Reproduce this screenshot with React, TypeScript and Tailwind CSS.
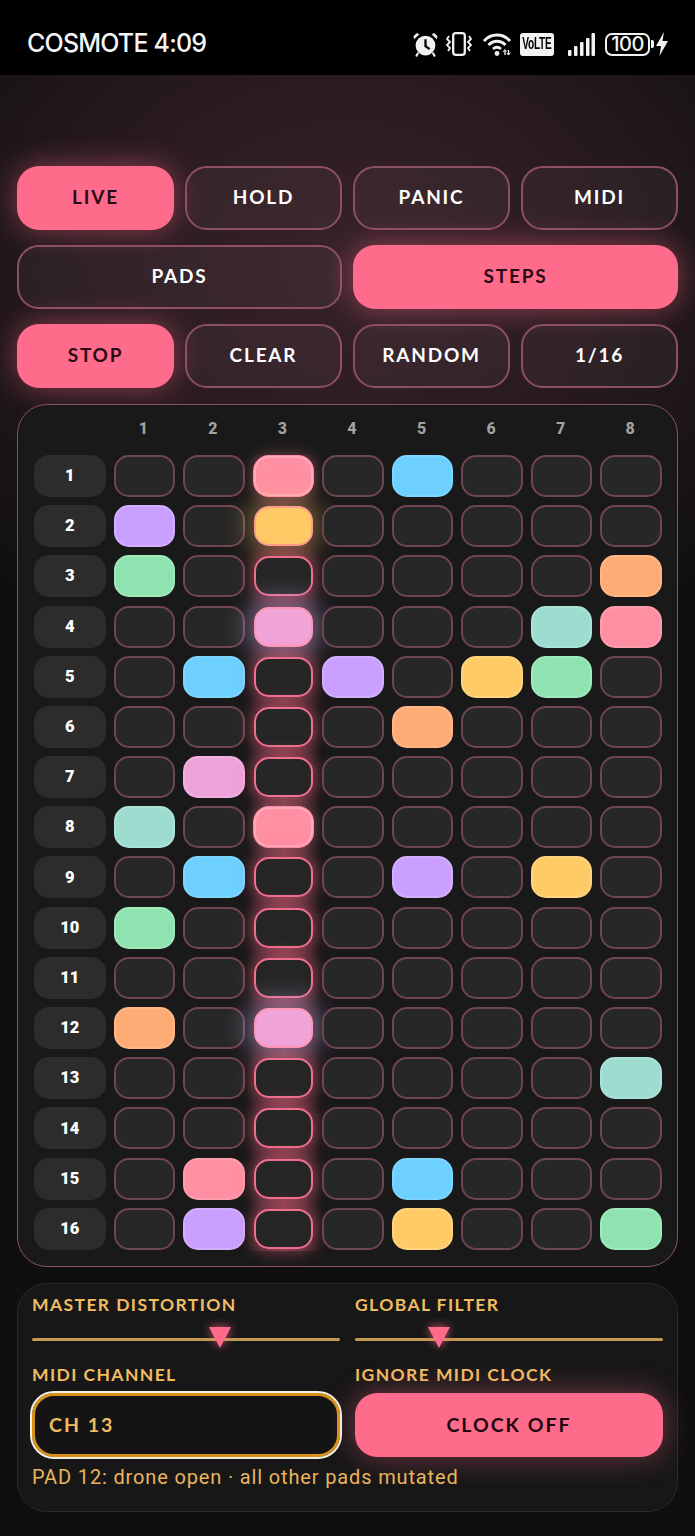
import React from "react";

type PadColor = "rose" | "sky" | "violet" | "amber" | "mint" | "peach" | "orchid" | "teal";

const padFill: Record<PadColor, string> = {
  rose: "bg-[#ff8fa3] border-[#ff9cae]",
  sky: "bg-[#6dd0ff] border-[#7dd6ff]",
  violet: "bg-[#c9a0ff] border-[#d2b0ff]",
  amber: "bg-[#ffcb66] border-[#ffd47c]",
  mint: "bg-[#8fe3b0] border-[#9deabb]",
  peach: "bg-[#ffab76] border-[#ffb786]",
  orchid: "bg-[#eda2d8] border-[#f2b0e0]",
  teal: "bg-[#9edcd0] border-[#ace3d8]",
};

const playFill: Record<string, string> = {
  rose: "bg-[#ff8fa3] border-[#ffa9b8] shadow-[0_0_0_1px_#ff8ba6,0_0_14px_2px_rgba(255,143,163,0.32)]",
  amber: "bg-[#ffcb66] border-[#ff9e8c] shadow-[0_0_24px_8px_rgba(255,203,102,0.34)]",
  orchid: "bg-[#f0a4d8] border-[#ff96b6] shadow-[0_0_24px_8px_rgba(200,170,235,0.46)]",
};

// Sequence pattern: one map per step row, keyed by pad column (1-8).
const pattern: Record<number, PadColor>[] = [
  { 3: "rose", 5: "sky" },
  { 1: "violet", 3: "amber" },
  { 1: "mint", 8: "peach" },
  { 3: "orchid", 7: "teal", 8: "rose" },
  { 2: "sky", 4: "violet", 6: "amber", 7: "mint" },
  { 5: "peach" },
  { 2: "orchid" },
  { 1: "teal", 3: "rose" },
  { 2: "sky", 5: "violet", 7: "amber" },
  { 1: "mint" },
  {},
  { 1: "peach", 3: "orchid" },
  { 8: "teal" },
  {},
  { 2: "rose", 5: "sky" },
  { 2: "violet", 5: "amber", 8: "mint" },
];

const columns = [1, 2, 3, 4, 5, 6, 7, 8];
const uiFont = "font-['Lato','Noto_Sans',sans-serif]";

function Btn({ label, on, wide }: { label: string; on?: boolean; wide?: boolean }) {
  return (
    <button
      className={`h-[64px] rounded-[22px] pb-[2px] text-[19px] font-bold tracking-[1.8px] ${wide ? "col-span-2" : ""} ${
        on
          ? "bg-[#ff6b8b] text-[#2a0a14] shadow-[0_0_30px_rgba(255,107,139,0.46)]"
          : "border-2 border-[#8c4f63] bg-[rgba(255,255,255,0.04)] text-white"
      }`}
    >
      {label}
    </button>
  );
}

function Cell({ row, col }: { row: number; col: number }) {
  const color = pattern[row][col];
  if (col === 3) {
    return (
      <div
        className={`relative z-10 mx-[1.5px] my-px h-[40px] rounded-[15px] border-2 ${
          color ? playFill[color] : "border-[#ef6f8e] bg-[#262626] shadow-[0_0_16px_3px_rgba(255,107,139,0.42)]"
        }`}
      />
    );
  }
  return (
    <div
      className={`relative z-10 h-[42px] rounded-[15px] border-2 ${
        color ? padFill[color] : "border-[#6f4553] bg-[#272727]"
      }`}
    />
  );
}

function Slider({ at }: { at: string }) {
  return (
    <div className="relative mt-[12px] h-[21px]">
      <div className="absolute inset-x-0 top-[11px] h-[3px] rounded-full bg-[#c29a54]" />
      <svg
        viewBox="0 0 22 21"
        className={`absolute top-0 h-[21px] w-[22px] ${at} drop-shadow-[0_0_5px_rgba(255,107,139,0.8)]`}
      >
        <path d="M0 0H22L11 21Z" fill="#ff6b8b" />
      </svg>
    </div>
  );
}

function StatusIcons() {
  return (
    <div className="flex items-center">
      {/* alarm clock */}
      <svg viewBox="0 0 24 24" className="h-[25px] w-[25px]" fill="#f2f2f2">
        <circle cx="12" cy="13" r="9.5" />
        <path d="M1 7 6 2.5 3.8 1 0.6 3.8ZM23 7 18 2.5 20.2 1 23.4 3.8Z" />
        <path d="M5 20 3 23.5M19 20 21 23.5" stroke="#f2f2f2" strokeWidth="2" />
        <path d="M12 7v6.5l4 3" stroke="#000" strokeWidth="2.2" fill="none" />
      </svg>
      {/* vibrate */}
      <svg viewBox="0 0 26 24" className="ml-[8px] h-[24px] w-[26px]" fill="none" stroke="#f2f2f2" strokeWidth="2.3">
        <rect x="7.2" y="1.2" width="11.6" height="21.6" rx="2.6" />
        <path d="M3 4 1 7l3 3-3 3 3 3-2 3M23 4l2 3-3 3 3 3-3 3 2 3" strokeWidth="1.8" />
      </svg>
      {/* wifi with transfer arrows */}
      <svg viewBox="0 0 30 24" className="ml-[11px] h-[24px] w-[30px]" fill="none" stroke="#f2f2f2">
        <path d="M1 9C8 1 20 1 27 9" strokeWidth="2.8" />
        <path d="M5.5 13C10.5 8 17.5 8 22.5 13" strokeWidth="2.8" />
        <path d="M10 17c2.500-2.300 5.500-2.300 8 0" strokeWidth="2.8" />
        <circle cx="14" cy="21.500" r="2.400" fill="#f2f2f2" stroke="none" />
        <path d="M22 23v-5M25.500 18v5" strokeWidth="1.4" />
        <path d="M20 20l2-2.500 1.500 2M24 21l1.500 2 2-2.500" strokeWidth="1" />
      </svg>
      {/* VoLTE badge */}
      <span className="ml-[7px] flex h-[23px] w-[34px] items-center justify-center overflow-hidden rounded-[3px] bg-[#f2f2f2] font-['Liberation_Sans',sans-serif] text-[13px] font-bold text-black">
        <span className="inline-block scale-x-[0.78] scale-y-[1.3] tracking-[-0.3px]">VoLTE</span>
      </span>
      {/* signal bars */}
      <svg viewBox="0 0 27 23" className="ml-[14px] h-[23px] w-[27px]" fill="#f2f2f2">
        <rect x="0" y="17" width="3.500" height="6" rx="1" />
        <rect x="6" y="13" width="3.500" height="10" rx="1" />
        <rect x="12" y="9" width="3.500" height="14" rx="1" />
        <rect x="18" y="5" width="3.500" height="18" rx="1" />
        <rect x="23.500" y="0" width="3.500" height="23" rx="1" />
      </svg>
      {/* battery */}
      <span className="relative ml-[10px] flex h-[23px] w-[45px] items-center justify-center rounded-[7px] border-2 border-[#f2f2f2] font-['Inter',sans-serif] text-[20px] font-medium tracking-[-0.5px] text-[#f2f2f2]">
        100
        <span className="absolute right-[-6px] top-[5px] h-[8px] w-[3px] rounded-r-[2px] bg-[#f2f2f2]" />
      </span>
      <svg viewBox="0 0 12 24" className="ml-[6px] h-[24px] w-[12px]" fill="#f2f2f2">
        <path d="M8 0 0 14H5L3.500 24 12 9H6.500Z" />
      </svg>
    </div>
  );
}

export default function App() {
  return (
    <div className={`${uiFont} flex h-[1536px] w-full flex-col overflow-hidden bg-[#0f0f0f]`}>
      <header className="flex h-[75px] shrink-0 items-center justify-between bg-black px-[27px] pt-[13px] font-['Inter',sans-serif] text-[25px] font-medium tracking-[-0.8px] text-[#f5f5f5]">
        <span>COSMOTE 4:09</span>
        <StatusIcons />
      </header>

      <main className="flex flex-1 flex-col bg-[radial-gradient(ellipse_540px_420px_at_50%_190px,#38222a_0%,#2a1b20_45%,#14100f00_100%)] px-[17px] pt-[91px]">
        <div className="grid grid-cols-4 gap-x-[11px] gap-y-[15px]">
          <Btn label="LIVE" on />
          <Btn label="HOLD" />
          <Btn label="PANIC" />
          <Btn label="MIDI" />
          <Btn label="PADS" wide />
          <Btn label="STEPS" on wide />
          <Btn label="STOP" on />
          <Btn label="CLEAR" />
          <Btn label="RANDOM" />
          <Btn label="1/16" />
        </div>

        <section className="mt-[16px] h-[863px] rounded-[30px] border-[1.5px] border-[#8a5064] bg-[#1a1919] pl-[16px] pr-[15px] pt-[10px]">
          <div className="relative grid grid-cols-[71.5px_repeat(8,minmax(0,1fr))] gap-x-[8px] gap-y-[8.200px]">
            <div className="h-[31.800px]" />
            {columns.map((c) => (
              <div
                key={c}
                className="h-[31.800px] pr-[2px] text-center font-['Roboto',sans-serif] text-[16px] font-extrabold leading-[28px] text-[#a3a3a3]"
              >
                {c}
              </div>
            ))}
            {/* playhead band sits behind the third pad column, stronger toward the lower steps */}
            <div className="pointer-events-none absolute bottom-[-1px] left-[213px] top-[40px] w-[74px] bg-[linear-gradient(90deg,rgba(255,107,139,0)_0%,rgba(255,107,139,0.18)_24%,rgba(255,107,139,0.32)_50%,rgba(255,107,139,0.18)_76%,rgba(255,107,139,0)_100%)] [mask-image:linear-gradient(180deg,rgba(0,0,0,0.45)_0%,rgba(0,0,0,1)_40%)]" />
            {pattern.map((_, row) => (
              <React.Fragment key={row}>
                <div className="flex h-[42px] items-center justify-center rounded-[15px] bg-[#2c2c2c] pt-px font-['Roboto',sans-serif] text-[16.500px] font-black text-white">
                  {row + 1}
                </div>
                {columns.map((c) => (
                  <Cell key={c} row={row} col={c} />
                ))}
              </React.Fragment>
            ))}
          </div>
        </section>

        <section className="mt-[16px] h-[229px] rounded-[30px] border-[1.5px] border-[#2a2a2a] bg-[#171717] px-[14px] pt-[11px]">
          <div className="grid grid-cols-2 gap-x-[15px] text-[17.500px] font-bold tracking-[1.4px] text-[#f0bc62]">
            <div>
              <div className="h-[20px] leading-[20px]">MASTER DISTORTION</div>
              <Slider at="left-[177px]" />
            </div>
            <div>
              <div className="h-[20px] leading-[20px]">GLOBAL FILTER</div>
              <Slider at="left-[73px]" />
            </div>
            <div className="mt-[17px] h-[20px] leading-[20px]">MIDI CHANNEL</div>
            <div className="mt-[17px] h-[20px] leading-[20px]">IGNORE MIDI CLOCK</div>
            <div className="mt-[8px] flex h-[64px] items-center rounded-[22px] border-[3px] border-[#d8921c] bg-[#141414] pl-[14px] text-[19.500px] tracking-[2px] outline-2 outline-[#f5f0e0]">
              CH 13
            </div>
            <button className="mt-[8px] h-[64px] rounded-[22px] bg-[#ff6b8b] text-[19.500px] tracking-[2px] text-[#1e0810] shadow-[0_0_30px_rgba(255,107,139,0.4)]">
              CLOCK OFF
            </button>
          </div>
          <p className="mt-[8px] font-['Roboto',sans-serif] text-[20px] font-normal leading-[24px] tracking-[0.85px] text-[#eab45e]">
            PAD 12: drone open · all other pads mutated
          </p>
        </section>
      </main>
    </div>
  );
}
